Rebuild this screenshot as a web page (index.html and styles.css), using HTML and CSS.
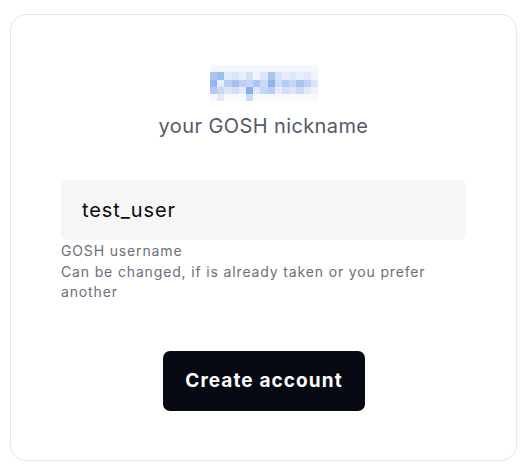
FILE: index.html
```html
<!DOCTYPE html>
<html>
<head>
<meta charset="utf-8">
<link rel="stylesheet" href="styles.css">
</head>
<body>
<div class="card">
  <div class="logo">
    <svg width="108" height="40" viewBox="0 0 15 5.5" shape-rendering="crispEdges">
      <rect x="0" y="0" width="15" height="1" fill="#f4f7fd"/>
      <rect x="0" y="1" width="1" height="1" fill="#a9c4f2"/>
      <rect x="1" y="1" width="1" height="1" fill="#9dbcf0"/>
      <rect x="2" y="1" width="1" height="1" fill="#e1eafb"/>
      <rect x="3" y="1" width="1" height="1" fill="#dbe6fa"/>
      <rect x="4" y="1" width="1" height="1" fill="#e8effc"/>
      <rect x="5" y="1" width="1" height="1" fill="#d3e0f9"/>
      <rect x="6" y="1" width="1" height="1" fill="#eef3fd"/>
      <rect x="7" y="1" width="1" height="1" fill="#dce6fa"/>
      <rect x="8" y="1" width="1" height="1" fill="#a8c3f2"/>
      <rect x="9" y="1" width="1" height="1" fill="#d5e2f9"/>
      <rect x="10" y="1" width="1" height="1" fill="#e5edfb"/>
      <rect x="11" y="1" width="1" height="1" fill="#dde7fa"/>
      <rect x="12" y="1" width="1" height="1" fill="#e9f0fc"/>
      <rect x="13" y="1" width="1" height="1" fill="#dfe8fa"/>
      <rect x="14" y="1" width="1" height="1" fill="#eef3fd"/>
      <rect x="0" y="2" width="1" height="1" fill="#94b6ef"/>
      <rect x="1" y="2" width="1" height="1" fill="#e6eefc"/>
      <rect x="2" y="2" width="1" height="1" fill="#b6cdf4"/>
      <rect x="3" y="2" width="1" height="1" fill="#a3c0f1"/>
      <rect x="4" y="2" width="1" height="1" fill="#bcd1f5"/>
      <rect x="5" y="2" width="1" height="1" fill="#c4d7f6"/>
      <rect x="6" y="2" width="1" height="1" fill="#aac5f2"/>
      <rect x="7" y="2" width="1" height="1" fill="#c9daf7"/>
      <rect x="8" y="2" width="1" height="1" fill="#8fb3ee"/>
      <rect x="9" y="2" width="1" height="1" fill="#cddcf8"/>
      <rect x="10" y="2" width="1" height="1" fill="#b4ccf4"/>
      <rect x="11" y="2" width="1" height="1" fill="#c6d8f7"/>
      <rect x="12" y="2" width="1" height="1" fill="#a9c4f2"/>
      <rect x="13" y="2" width="1" height="1" fill="#bfd3f6"/>
      <rect x="14" y="2" width="1" height="1" fill="#d8e4f9"/>
      <rect x="0" y="3" width="1" height="1" fill="#b3cbf4"/>
      <rect x="1" y="3" width="1" height="1" fill="#c8d9f7"/>
      <rect x="2" y="3" width="1" height="1" fill="#dbe6fa"/>
      <rect x="3" y="3" width="1" height="1" fill="#d1dff8"/>
      <rect x="4" y="3" width="1" height="1" fill="#e2ebfb"/>
      <rect x="5" y="3" width="1" height="1" fill="#86adec"/>
      <rect x="6" y="3" width="1" height="1" fill="#dfe8fa"/>
      <rect x="7" y="3" width="1" height="1" fill="#c3d6f6"/>
      <rect x="8" y="3" width="1" height="1" fill="#b8cef5"/>
      <rect x="9" y="3" width="1" height="1" fill="#e4ecfb"/>
      <rect x="10" y="3" width="1" height="1" fill="#d0def8"/>
      <rect x="11" y="3" width="1" height="1" fill="#dae5fa"/>
      <rect x="12" y="3" width="1" height="1" fill="#c7d9f7"/>
      <rect x="13" y="3" width="1" height="1" fill="#e3ebfb"/>
      <rect x="14" y="3" width="1" height="1" fill="#edf2fd"/>
      <rect x="0" y="4" width="15" height="1" fill="#f7f9fe"/>
      <rect x="5" y="4" width="1" height="1" fill="#cbdbf7"/>
      <rect x="1" y="4" width="1" height="1" fill="#e3ebfb"/>
    </svg>
  </div>
  <div class="title">your GOSH nickname</div>
  <div class="field">
    <div class="input">test_user</div>
    <div class="hint">GOSH username<br>Can be changed, if is already taken or you prefer another</div>
  </div>
  <div class="actions">
    <button class="btn">Create account</button>
  </div>
</div>
</body>
</html>
```

FILE: styles.css
```css
html, body {
  margin: 0;
  padding: 0;
  background: #ffffff;
}
body {
  padding: 14px 10px 0 10px;
  font-family: "Inter", "Noto Sans", sans-serif;
}
.card {
  width: 405px;
  border: 1px solid #e6e6e6;
  border-radius: 16px;
  padding: 50px 50px 49px 50px;
  box-sizing: content-box;
}
.logo {
  display: flex;
  justify-content: center;
  height: 40px;
  margin-left: 1px;
}
.logo svg {
  display: block;
}
.title {
  text-align: center;
  font-size: 20px;
  letter-spacing: 0.4px;
  line-height: 28px;
  color: #555a66;
  margin-top: 7px;
}
.field {
  margin-top: 40px;
}
.input {
  height: 60px;
  background: #f6f6f6;
  border-radius: 6px;
  display: flex;
  align-items: center;
  padding-left: 21px;
  font-size: 20px;
  letter-spacing: 0.9px;
  color: #0b0b0b;
}
.hint {
  font-size: 14px;
  letter-spacing: 0.85px;
  line-height: 20.5px;
  color: #6b6f7a;
  margin-top: 1px;
  padding-right: 10px;
}
.actions {
  display: flex;
  justify-content: center;
  margin-top: 48px;
  margin-left: 1px;
}
.btn {
  width: 202px;
  height: 60px;
  border: none;
  border-radius: 7px;
  background: #070a12;
  color: #ffffff;
  font-family: "Inter", "Noto Sans", sans-serif;
  font-weight: 700;
  font-size: 19px;
  letter-spacing: 1.1px;
  cursor: pointer;
}
```
